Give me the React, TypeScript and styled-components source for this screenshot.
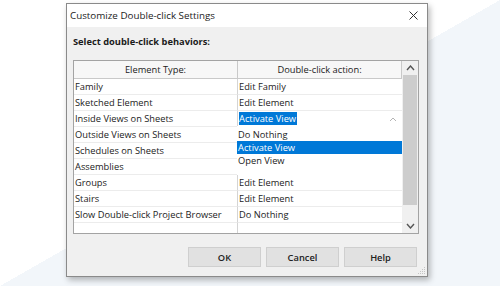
import React from 'react';
import styled, { createGlobalStyle } from 'styled-components';

const Global = createGlobalStyle`
  html, body { margin: 0; padding: 0; background: #ffffff; }
  body { font-family: "Open Sans", "Noto Sans", "DejaVu Sans", sans-serif; }
`;

const Page = styled.div`
  width: 500px;
  height: 286px;
  box-sizing: border-box;
  padding: 3px 0 0 66px;
  background: linear-gradient(to top left, #f2f6fa 50%, #ffffff 50%);
  overflow: hidden;
`;

const Dialog = styled.div`
  position: relative;
  width: 362px;
  height: 274px;
  box-sizing: border-box;
  border: 1px solid #8a8a8a;
  box-shadow: 2px 3px 6px rgba(0, 0, 0, 0.28);
  background: #f0f0f0;
  display: flex;
  flex-direction: column;
  font-size: 9.3px;
  color: #1b1b1b;
`;

const TitleBar = styled.div`
  height: 23px;
  flex: none;
  background: #ffffff;
  display: flex;
  align-items: center;
  justify-content: space-between;
  padding: 0 9px 0 3px;
`;

const Title = styled.span`
  font-size: 9.8px;
  color: #222;
`;

const Body = styled.div`
  flex: 1;
  display: flex;
  flex-direction: column;
  padding: 9px 8px 9px 6px;
`;

const Label = styled.div`
  font-weight: 700;
  line-height: 12px;
  height: 12px;
  margin-bottom: 12px;
`;

const Table = styled.div`
  height: 174px;
  box-sizing: border-box;
  border: 1px solid #a3a3a3;
  display: flex;
  background: #ffffff;
`;

const Grid = styled.div`
  flex: 1;
  display: flex;
  flex-direction: column;
`;

const Row = styled.div<{ $h: number }>`
  display: grid;
  grid-template-columns: 164px 1fr;
  height: ${(p) => p.$h}px;
  flex: none;
`;

const Filler = styled.div`
  flex: 1;
  display: grid;
  grid-template-columns: 164px 1fr;
`;

const HeadCell = styled.div`
  box-sizing: border-box;
  background: #f7f7f7;
  border-bottom: 1px solid #c9c9c9;
  border-right: 1px solid #c9c9c9;
  display: flex;
  align-items: center;
  justify-content: center;
  color: #222;
`;

const Cell = styled.div<{ $first?: boolean; $blank?: boolean }>`
  position: relative;
  box-sizing: border-box;
  border-bottom: ${(p) => (p.$blank ? 'none' : '1px solid #ececec')};
  border-right: ${(p) => (p.$first ? '1px solid #d4d4d4' : 'none')};
  display: flex;
  align-items: center;
  padding-left: 1px;
  white-space: nowrap;
  line-height: 13px;
`;

const Selected = styled.span`
  background: #0078d7;
  color: #ffffff;
  padding: 0 1px 0 0;
  line-height: 13px;
`;

const ComboArrow = styled.svg`
  position: absolute;
  right: 5px;
  top: 6px;
`;

const DropList = styled.div`
  position: absolute;
  top: 15px;
  left: -1px;
  right: 0;
  height: 49px;
  box-sizing: border-box;
  padding-top: 2px;
  background: #ffffff;
  z-index: 2;
  display: flex;
  flex-direction: column;
`;

const Option = styled.div<{ $active?: boolean }>`
  height: 13px;
  line-height: 13px;
  padding-left: 1px;
  background: ${(p) => (p.$active ? '#0078d7' : 'transparent')};
  color: ${(p) => (p.$active ? '#ffffff' : '#1b1b1b')};
`;

const Scrollbar = styled.div`
  width: 16px;
  flex: none;
  background: #f0f0f0;
  display: flex;
  flex-direction: column;
`;

const ArrowBtn = styled.div<{ $h: number }>`
  height: ${(p) => p.$h}px;
  display: flex;
  align-items: center;
  justify-content: center;
`;

const Thumb = styled.div`
  height: 130px;
  margin: 0 1px;
  background: #cdcdcd;
`;

const Track = styled.div`
  flex: 1;
`;

const Buttons = styled.div`
  margin-top: 13px;
  display: flex;
  justify-content: flex-end;
  gap: 5px;
  padding-right: 2px;
`;

const Button = styled.button`
  width: 73px;
  height: 20px;
  box-sizing: border-box;
  border: 1px solid #cfcfcf;
  background: #e1e1e1;
  font-family: inherit;
  font-size: 9.3px;
  font-weight: 600;
  color: #222;
  padding: 0;
`;

const Grip = styled.svg`
  position: absolute;
  right: 1px;
  bottom: 1px;
`;

const Chevron = ({ up, color = '#555', w = 7, h = 4 }: { up: boolean; color?: string; w?: number; h?: number }) => (
  <svg width={w + 2} height={h + 2} viewBox={`0 0 ${w + 2} ${h + 2}`}>
    <polyline
      points={up ? `1,${h + 1} ${(w + 2) / 2},1 ${w + 1},${h + 1}` : `1,1 ${(w + 2) / 2},${h + 1} ${w + 1},1`}
      fill="none"
      stroke={color}
      strokeWidth="1.4"
    />
  </svg>
);

// action text is empty for rows whose action cell is covered by the open drop-down list
const rows: [string, string][] = [
  ['Family', 'Edit Family'],
  ['Sketched Element', 'Edit Element'],
  ['Inside Views on Sheets', 'Activate View'],
  ['Outside Views on Sheets', ''],
  ['Schedules on Sheets', ''],
  ['Assemblies', ''],
  ['Groups', 'Edit Element'],
  ['Stairs', 'Edit Element'],
  ['Slow Double-click Project Browser', 'Do Nothing'],
];

export default function App() {
  return (
    <>
      <Global />
      <Page>
        <Dialog>
          <TitleBar>
            <Title>Customize Double-click Settings</Title>
            <svg width="9" height="9" viewBox="0 0 9 9">
              <path d="M0.5 0.5 L8.5 8.5 M8.5 0.5 L0.5 8.5" stroke="#333" strokeWidth="1" />
            </svg>
          </TitleBar>
          <Body>
            <Label>Select double-click behaviors:</Label>
            <Table>
              <Grid>
                <Row $h={18}>
                  <HeadCell>Element Type:</HeadCell>
                  <HeadCell>Double-click action:</HeadCell>
                </Row>
                {rows.map(([a, b], i) => (
                  <Row $h={16} key={a}>
                    <Cell $first>{a}</Cell>
                    {i === 2 ? (
                      <Cell>
                        <Selected>{b}</Selected>
                        <ComboArrow width="8" height="5" viewBox="0 0 8 5">
                          <polyline points="1,4 4,1 7,4" fill="none" stroke="#b4b4b4" strokeWidth="1" />
                        </ComboArrow>
                        <DropList>
                          <Option>Do Nothing</Option>
                          <Option $active>Activate View</Option>
                          <Option>Open View</Option>
                        </DropList>
                      </Cell>
                    ) : (
                      <Cell>{b}</Cell>
                    )}
                  </Row>
                ))}
                <Filler>
                  <Cell $first $blank />
                  <Cell $blank />
                </Filler>
              </Grid>
              <Scrollbar>
                <ArrowBtn $h={14}>
                  <Chevron up />
                </ArrowBtn>
                <Thumb />
                <Track />
                <ArrowBtn $h={15}>
                  <Chevron up={false} />
                </ArrowBtn>
              </Scrollbar>
            </Table>
            <Buttons>
              <Button>OK</Button>
              <Button>Cancel</Button>
              <Button>Help</Button>
            </Buttons>
          </Body>
          <Grip width="9" height="9" viewBox="0 0 9 9">
            <g fill="#c4c4c4">
              <rect x="7" y="1" width="1" height="1" />
              <rect x="5" y="3" width="1" height="1" />
              <rect x="7" y="3" width="1" height="1" />
              <rect x="3" y="5" width="1" height="1" />
              <rect x="5" y="5" width="1" height="1" />
              <rect x="7" y="5" width="1" height="1" />
              <rect x="1" y="7" width="1" height="1" />
              <rect x="3" y="7" width="1" height="1" />
              <rect x="5" y="7" width="1" height="1" />
              <rect x="7" y="7" width="1" height="1" />
            </g>
          </Grip>
        </Dialog>
      </Page>
    </>
  );
}
